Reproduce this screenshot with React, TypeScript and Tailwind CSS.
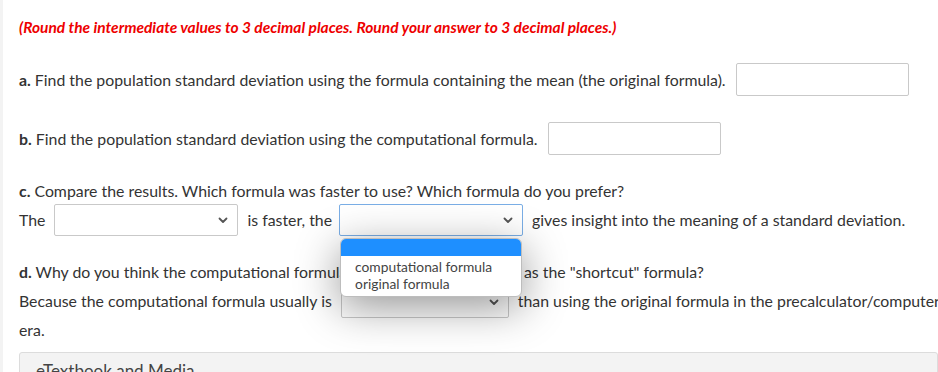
import React from "react";

function Chevron() {
  return (
    <svg width="10" height="7" viewBox="0 0 10 7" className="shrink-0">
      <path d="M1.5 1.5 L5 5 L8.5 1.5" fill="none" stroke="#555" strokeWidth="1.8" strokeLinecap="round" strokeLinejoin="round" />
    </svg>
  );
}

function Select({ w, h = 32, focused = false }: { w: number; h?: number; focused?: boolean }) {
  return (
    <div
      className={`flex items-center justify-end rounded-[2px] border bg-white pr-[9px] ${
        focused ? "border-[#7aaee6]" : "border-[#c9c9c9]"
      }`}
      style={{ width: w, height: h }}
    >
      <Chevron />
    </div>
  );
}

function TextBox({ w }: { w: number }) {
  return <div className="h-[33px] rounded-[2px] border border-[#c9c9c9] bg-white" style={{ width: w }} />;
}

export default function App() {
  return (
    <div className="flex h-[372px] w-[938px] overflow-hidden bg-white font-['Lato','Open_Sans',sans-serif] text-[15.85px] leading-[20px] text-[#333]">
      <div className="w-[3px] shrink-0 bg-[#f3f3f3]" />
      <div className="min-w-0 flex-1 pl-[16px] pt-[17px]">
        <p className="text-[15.5px] font-bold italic text-[#ee0000]">
          (Round the intermediate values to 3 decimal places. Round your answer to 3 decimal places.)
        </p>

        <div className="mt-[26px] flex items-center gap-[10px] whitespace-nowrap">
          <span>
            <b>a.</b> Find the population standard deviation using the formula containing the mean (the original formula).
          </span>
          <TextBox w={173} />
        </div>

        <div className="mt-[26px] flex items-center gap-[10px] whitespace-nowrap">
          <span>
            <b>b.</b> Find the population standard deviation using the computational formula.
          </span>
          <TextBox w={173} />
        </div>

        <p className="mt-[26px] whitespace-nowrap">
          <b>c.</b> Compare the results. Which formula was faster to use? Which formula do you prefer?
        </p>

        <div className="mt-[3px] flex items-center whitespace-nowrap">
          <span>The</span>
          <div className="ml-[9px]">
            <Select w={184} />
          </div>
          <span className="ml-[9px]">is faster, the</span>
          <div className="relative z-10 ml-[7px]">
            <Select w={184} focused />
            <div className="absolute left-[1px] top-[34px] w-[182px] overflow-hidden rounded-[6px] border border-[#bdbdbd] bg-white text-[13.8px] leading-[17px] text-[#444] shadow-[0_10px_44px_rgba(0,0,0,0.42)]">
              <div className="h-[17px] bg-[#1e8fff]" />
              <div className="px-[14px] pt-[2px]">computational formula</div>
              <div className="px-[14px] pb-[4px]">original formula</div>
            </div>
          </div>
          <span className="ml-[9px]">gives insight into the meaning of a standard deviation.</span>
        </div>

        <p className="mt-[26px] whitespace-nowrap">
          <b>d.</b> Why do you think the computational formula is sometimes referred to as the "shortcut" formula?
        </p>

        <div className="mt-[5px] flex items-center whitespace-nowrap">
          <span className="-mt-[3px]">Because the computational formula usually is</span>
          <div className="ml-[9px]">
            <Select w={168} h={31} />
          </div>
          <span className="-mt-[3px] ml-[9px]">than using the original formula in the precalculator/computer</span>
        </div>

        <p className="mt-[2px]">era.</p>

        <div className="mt-[12px] h-[40px] rounded-[3px] border border-[#dcdcdc] bg-[#f3f3f3] px-[16px] pt-[8px] text-[17px] text-[#444]">
          eTextbook and Media
        </div>
      </div>
    </div>
  );
}
